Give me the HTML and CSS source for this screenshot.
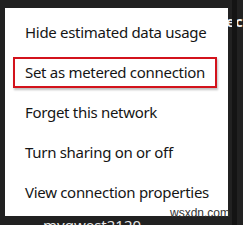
FILE: index.html
```html
<!DOCTYPE html>
<html>
<head>
<meta charset="utf-8">
<link rel="stylesheet" href="styles.css">
</head>
<body>
<div class="screen">
  <span class="behind-top">ec</span>
  <div class="scroll-strip"></div>
  <div class="menu">
    <div class="item">Hide estimated data usage</div>
    <div class="item highlighted"><span class="mark"></span>Set as metered connection</div>
    <div class="item">Forget this network</div>
    <div class="item">Turn sharing on or off</div>
    <div class="item">View connection properties</div>
  </div>
  <div class="below">myqwest2120</div>
  <span class="watermark">wsxdn.com</span>
</div>
</body>
</html>
```
FILE: styles.css
```css
html, body {
  margin: 0;
  padding: 0;
  background: #1f1f1f;
}
.screen {
  position: relative;
  width: 243px;
  height: 225px;
  overflow: hidden;
  background: #212121;
  padding: 8px 0 0 5px;
  box-sizing: border-box;
  font-family: "Noto Sans", "Open Sans", sans-serif;
}
.behind-top {
  position: absolute;
  left: 226px;
  top: 11px;
  color: #f0f0f0;
  font-size: 15px;
  font-weight: bold;
}
.scroll-strip {
  position: absolute;
  left: 232px;
  top: 0;
  width: 5px;
  height: 225px;
  background: #141414;
}
.menu {
  position: relative;
  width: 223px;
  background: #ffffff;
  padding: 4px 0 4px 0;
  display: flex;
  flex-direction: column;
}
.item {
  position: relative;
  height: 40px;
  line-height: 40px;
  padding-left: 20px;
  font-size: 15px;
  letter-spacing: -0.3px;
  color: #151515;
  white-space: nowrap;
}
.mark {
  position: absolute;
  left: 8px;
  top: 5px;
  width: 200px;
  height: 27px;
  border: 2px solid #d3131c;
  box-shadow: 1px 2px 2px rgba(0,0,0,0.25);
}
.below {
  padding-left: 38px;
  margin-top: 1px;
  color: #e8e8e8;
  font-size: 15px;
  line-height: 16px;
}
.watermark {
  position: absolute;
  left: 170px;
  top: 206px;
  color: #333;
  font-family: "Liberation Sans", sans-serif;
  font-size: 12px;
}
```
